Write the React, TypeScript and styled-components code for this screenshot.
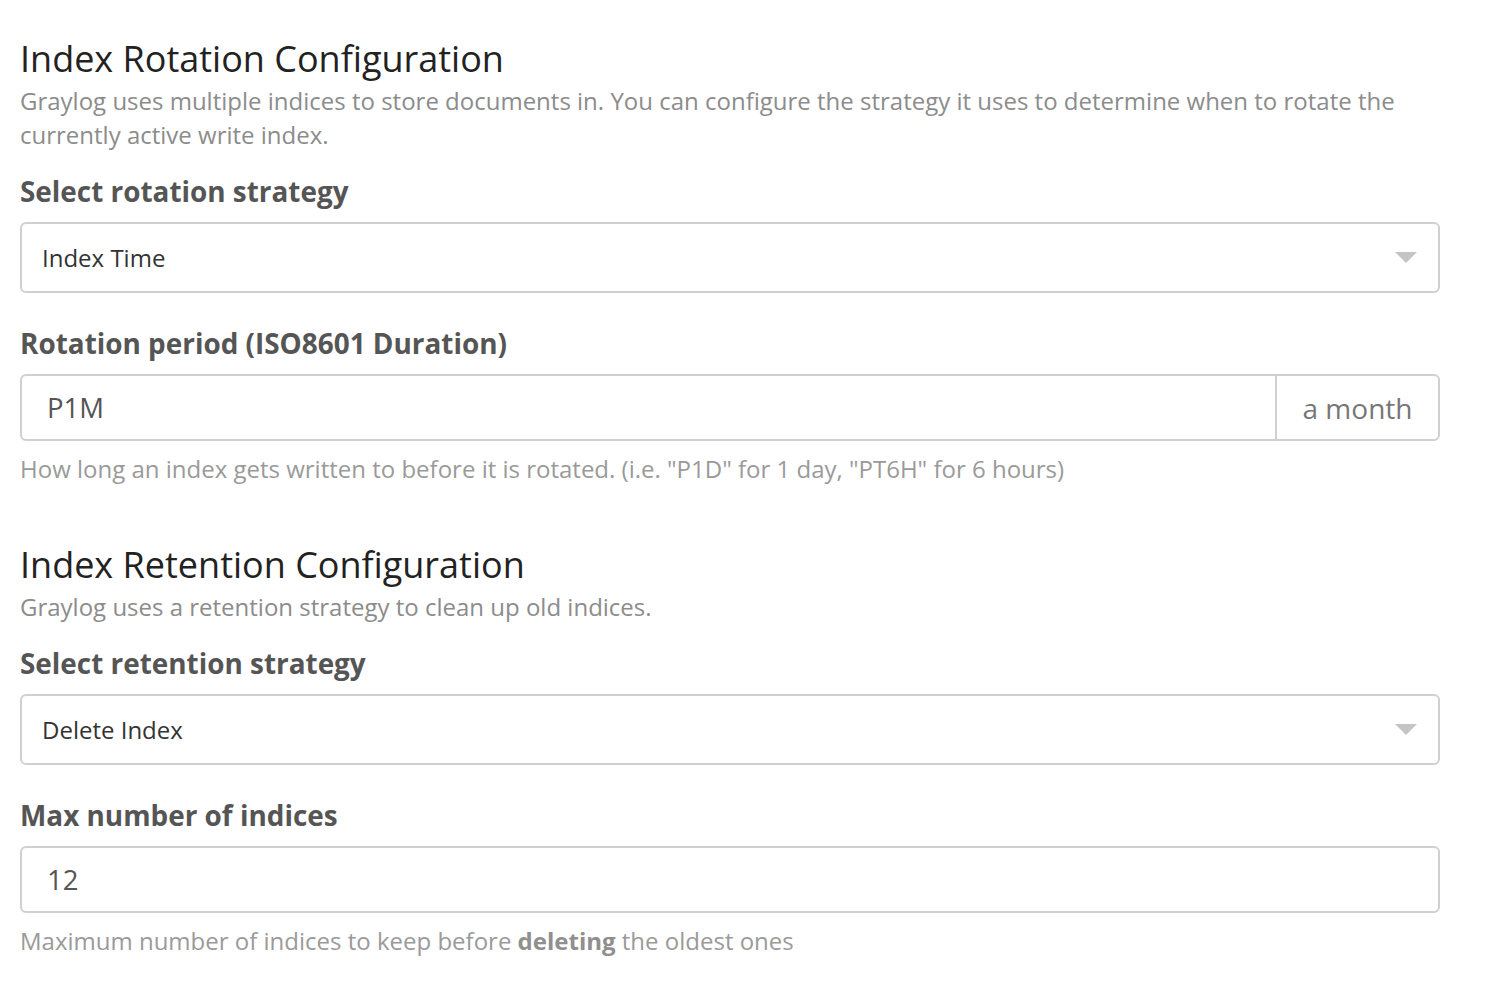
import React from "react";
import styled, { createGlobalStyle } from "styled-components";

const Global = createGlobalStyle`
  html, body { margin: 0; padding: 0; background: #fff; }
  body { font-family: "Open Sans", "Noto Sans", sans-serif; color: #333; }
  * { box-sizing: border-box; }
`;

const Page = styled.div`
  padding: 34px 56px 0 20px;
  display: flex;
  flex-direction: column;
`;

const Section = styled.section<{ $gap?: number }>`
  display: flex;
  flex-direction: column;
  margin-top: ${(p) => p.$gap ?? 0}px;
`;

const Title = styled.h2`
  margin: 0;
  font-size: 36px;
  font-weight: 400;
  line-height: 50px;
  color: #222;
`;

const Desc = styled.p`
  margin: 0;
  font-size: 24px;
  line-height: 34px;
  color: #8c8c8c;
`;

const Label = styled.label`
  display: block;
  margin-top: 21px;
  margin-bottom: 13px;
  font-size: 27.9px;
  font-weight: 700;
  line-height: 36px;
  color: #555;
`;

const Select = styled.div`
  height: 71px;
  border: 2px solid #d0d0d0;
  border-radius: 6px;
  display: flex;
  align-items: center;
  justify-content: space-between;
  padding: 0 20px 0 20px;
  font-size: 24px;
  color: #333;
  margin-bottom: 11px;
`;

const Arrow = styled.span`
  width: 0;
  height: 0;
  border-left: 11px solid transparent;
  border-right: 11px solid transparent;
  border-top: 11px solid #c4c4c4;
  margin-right: 1px;
`;

const InputGroup = styled.div`
  display: flex;
  height: 67px;
  border: 2px solid #d0d0d0;
  border-radius: 6px;
`;

const Input = styled.div`
  flex: 1;
  display: flex;
  align-items: center;
  padding-left: 25px;
  font-size: 27.5px;
  color: #555;
`;

const Addon = styled.div`
  width: 163px;
  border-left: 2px solid #d0d0d0;
  display: flex;
  align-items: center;
  justify-content: center;
  font-size: 28px;
  color: #777;
`;

const Help = styled.p`
  margin: 10px 0 0;
  font-size: 24px;
  line-height: 36px;
  color: #9a9a9a;
  b { font-weight: 700; color: #8f8f8f; }
`;

export default function App() {
  return (
    <>
      <Global />
      <Page>
        <Section>
          <Title>Index Rotation Configuration</Title>
          <Desc>
            Graylog uses multiple indices to store documents in. You can configure the strategy it uses to determine when to rotate the currently active write index.
          </Desc>
          <Label>Select rotation strategy</Label>
          <Select>
            <span>Index Time</span>
            <Arrow />
          </Select>
          <Label>Rotation period (ISO8601 Duration)</Label>
          <InputGroup>
            <Input>P1M</Input>
            <Addon>a month</Addon>
          </InputGroup>
          <Help>How long an index gets written to before it is rotated. (i.e. "P1D" for 1 day, "PT6H" for 6 hours)</Help>
        </Section>
        <Section $gap={53}>
          <Title>Index Retention Configuration</Title>
          <Desc>Graylog uses a retention strategy to clean up old indices.</Desc>
          <Label>Select retention strategy</Label>
          <Select>
            <span>Delete Index</span>
            <Arrow />
          </Select>
          <Label>Max number of indices</Label>
          <InputGroup>
            <Input>12</Input>
          </InputGroup>
          <Help>
            Maximum number of indices to keep before <b>deleting</b> the oldest ones
          </Help>
        </Section>
      </Page>
    </>
  );
}
